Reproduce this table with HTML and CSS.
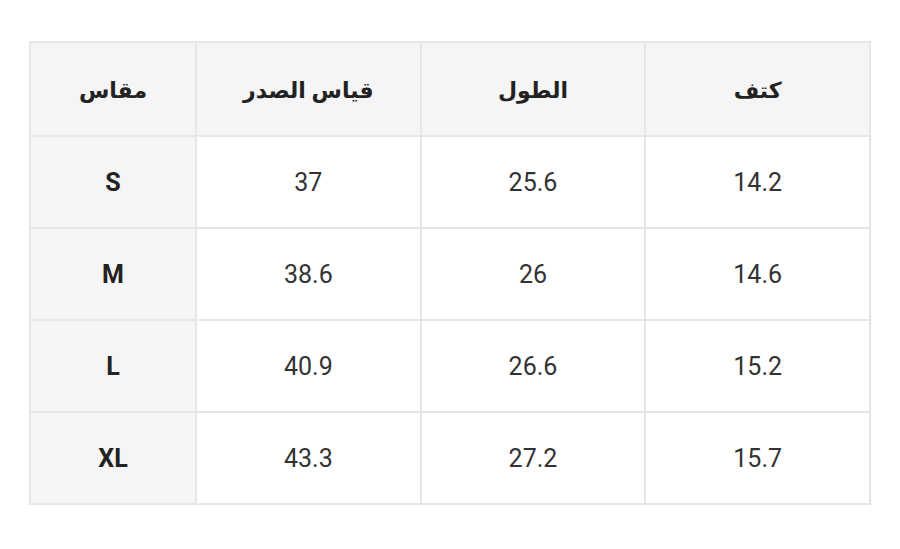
FILE: index.html
```html
<!DOCTYPE html>
<html lang="ar">
<head>
<meta charset="utf-8">
<link rel="stylesheet" href="styles.css">
</head>
<body>
<div class="wrap">
<table class="size-table">
  <thead>
    <tr>
      <th class="c1">مقاس</th>
      <th>قياس الصدر</th>
      <th>الطول</th>
      <th>كتف</th>
    </tr>
  </thead>
  <tbody>
    <tr><td class="c1">S</td><td>37</td><td>25.6</td><td>14.2</td></tr>
    <tr><td class="c1">M</td><td>38.6</td><td>26</td><td>14.6</td></tr>
    <tr><td class="c1">L</td><td>40.9</td><td>26.6</td><td>15.2</td></tr>
    <tr><td class="c1">XL</td><td>43.3</td><td>27.2</td><td>15.7</td></tr>
  </tbody>
</table>
</div>
</body>
</html>
```

FILE: styles.css
```css
html, body {
  margin: 0;
  padding: 0;
  background: #ffffff;
}
.wrap {
  padding: 41px 29px 0 29px;
}
.size-table {
  border-collapse: collapse;
  width: 842px;
  table-layout: fixed;
  font-family: Roboto, "Noto Sans", "DejaVu Sans", sans-serif;
  color: #222222;
}
.size-table th,
.size-table td {
  border: 2px solid #e6e6e6;
  text-align: center;
  vertical-align: middle;
  padding: 0;
  height: 90px;
  font-size: 25px;
}
.size-table th {
  background: #f5f5f5;
  font-weight: 700;
  height: 92px;
  font-family: "Noto Sans", "DejaVu Sans", sans-serif;
  font-size: 22px;
}
.size-table td {
  font-weight: 400;
  color: #333333;
}
.size-table .c1 {
  width: 164px;
  background: #f5f5f5;
}
.size-table td.c1 {
  font-weight: 700;
  color: #222222;
}
```
